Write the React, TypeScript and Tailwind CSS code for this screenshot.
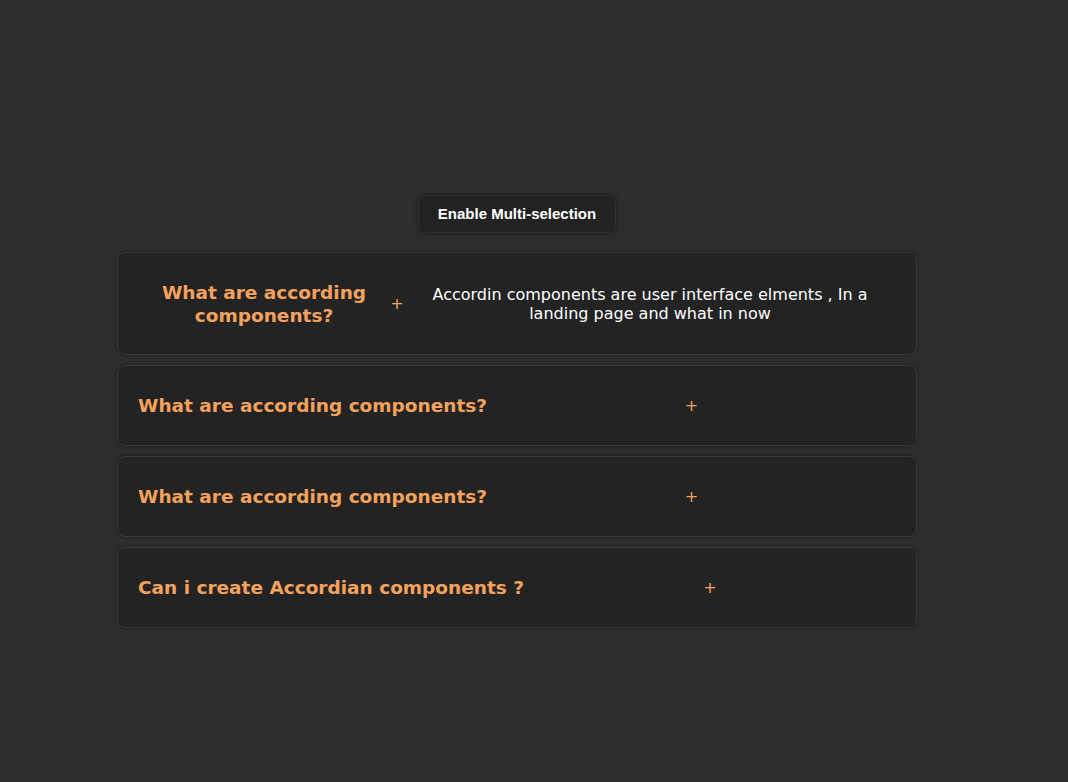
import React from "react";

const titleFont = { fontFamily: "'DejaVu Sans', Verdana, sans-serif" };

function Plus() {
  return (
    <span className="text-[#f5a25d] text-[16px] leading-none font-['DejaVu_Sans',sans-serif] select-none">+</span>
  );
}

export default function App() {
  const items = [
    "What are according components?",
    "What are according components?",
    "Can i create Accordian components ?",
  ];
  return (
    <div className="min-h-[782px] w-full bg-[#2c2d2f]">
      <div className="w-[1034px] flex flex-col items-center pt-[195px]">
        <button className="h-[38px] w-[198px] rounded-[6px] bg-[#222222] border border-[#2f2f2f] shadow-[0_0_4px_rgba(0,0,0,0.45)] text-white text-[15px] font-bold font-['Liberation_Sans',Arial,sans-serif]">
          Enable Multi-selection
        </button>
        <div className="mt-[19px] flex flex-col gap-[10px] w-[800px]">
          <div className="h-[103px] rounded-[8px] bg-[#232323] border border-[#393939] shadow-[0_0_3px_rgba(0,0,0,0.4)] px-[20px] flex items-center justify-between text-center">
            <div
              className="w-[252px] text-[#f5a25d] font-bold text-[18.5px] leading-[23px]"
              style={titleFont}
            >
              What are according components?
            </div>
            <Plus />
            <div
              className="w-[492px] text-white text-[16px] leading-[19px]"
              style={titleFont}
            >
              Accordin components are user interface elments , In a landing page and what in now
            </div>
          </div>
          {items.map((t, i) => (
            <div
              key={i}
              className="h-[81px] rounded-[8px] bg-[#232323] border border-[#393939] shadow-[0_0_3px_rgba(0,0,0,0.4)] px-[20px] flex items-center justify-between text-center"
            >
              <div className="text-[#f5a25d] font-bold text-[18.5px] leading-[23px]" style={titleFont}>
                {t}
              </div>
              <Plus />
              <div />
            </div>
          ))}
        </div>
      </div>
    </div>
  );
}
